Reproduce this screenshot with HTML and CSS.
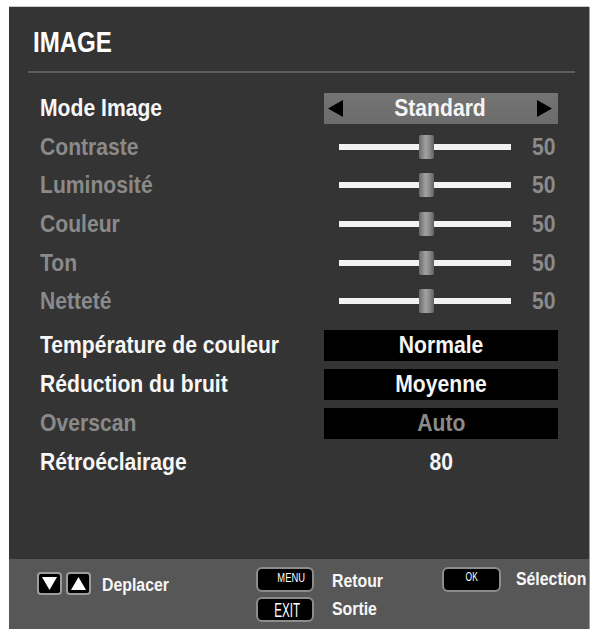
FILE: index.html
```html
<!DOCTYPE html>
<html lang="fr">
<head>
<meta charset="utf-8">
<title>IMAGE</title>
<link rel="stylesheet" href="styles.css">
</head>
<body>
<div class="panel">
  <div class="main">
    <h1 class="title"><span class="cond-l">IMAGE</span></h1>
    <div class="rule"></div>

    <div class="group group-a">
      <div class="row">
        <span class="label on"><span class="cond-l">Mode Image</span></span>
        <div class="ctl select">
          <svg class="tri" width="15" height="17" viewBox="0 0 15 17"><polygon points="15,0 15,17 0,8.5" fill="#000"/></svg>
          <span class="cond-c">Standard</span>
          <svg class="tri" width="15" height="17" viewBox="0 0 15 17"><polygon points="0,0 0,17 15,8.5" fill="#000"/></svg>
        </div>
      </div>
      <div class="row">
        <span class="label off"><span class="cond-l">Contraste</span></span>
        <div class="ctl slider"><div class="track"><div class="thumb"></div></div><span class="val"><span class="cond-l">50</span></span></div>
      </div>
      <div class="row">
        <span class="label off"><span class="cond-l">Luminosité</span></span>
        <div class="ctl slider"><div class="track"><div class="thumb"></div></div><span class="val"><span class="cond-l">50</span></span></div>
      </div>
      <div class="row">
        <span class="label off"><span class="cond-l">Couleur</span></span>
        <div class="ctl slider"><div class="track"><div class="thumb"></div></div><span class="val"><span class="cond-l">50</span></span></div>
      </div>
      <div class="row">
        <span class="label off"><span class="cond-l">Ton</span></span>
        <div class="ctl slider"><div class="track"><div class="thumb"></div></div><span class="val"><span class="cond-l">50</span></span></div>
      </div>
      <div class="row">
        <span class="label off"><span class="cond-l">Netteté</span></span>
        <div class="ctl slider"><div class="track"><div class="thumb"></div></div><span class="val"><span class="cond-l">50</span></span></div>
      </div>
    </div>

    <div class="group group-b">
      <div class="row row-b">
        <span class="label on"><span class="cond-l">Température de couleur</span></span>
        <div class="ctl box"><span class="cond-c">Normale</span></div>
      </div>
      <div class="row row-b">
        <span class="label on"><span class="cond-l">Réduction du bruit</span></span>
        <div class="ctl box"><span class="cond-c">Moyenne</span></div>
      </div>
      <div class="row row-b">
        <span class="label off"><span class="cond-l">Overscan</span></span>
        <div class="ctl box dim"><span class="cond-c">Auto</span></div>
      </div>
      <div class="row row-b">
        <span class="label on"><span class="cond-l">Rétroéclairage</span></span>
        <div class="ctl plain"><span class="cond-c">80</span></div>
      </div>
    </div>
  </div>

  <div class="foot">
    <div class="fgroup fg-move">
      <span class="key">
        <svg width="21" height="19" viewBox="0 0 21 19"><polygon points="3,3 18,3 10.5,16" fill="#fff"/></svg>
      </span>
      <span class="key">
        <svg width="21" height="19" viewBox="0 0 21 19"><polygon points="10.5,3 18,16 3,16" fill="#fff"/></svg>
      </span>
      <span class="ftext move-text"><span class="cond-l">Deplacer</span></span>
    </div>
    <div class="fgroup fg-nav">
      <span class="btn"><span class="btn-menu">MENU</span></span>
      <span class="ftext nav-top"><span class="cond-l">Retour</span></span>
      <span class="btn"><span class="btn-exit">EXIT</span></span>
      <span class="ftext"><span class="cond-l">Sortie</span></span>
    </div>
    <div class="fgroup fg-ok">
      <span class="btn btn-okbox"><span class="btn-ok">OK</span></span>
      <span class="ftext ok-text"><span class="cond-l">Sélection</span></span>
    </div>
  </div>
</div>
</body>
</html>
```

FILE: styles.css
```css
html, body {
  margin: 0;
  padding: 0;
  background: #ffffff;
}

body {
  font-family: "Liberation Sans", Arial, sans-serif;
  font-weight: bold;
}

.panel {
  margin: 7px 0 0 9px;
  width: 580px;
  height: 622px;
  background: #343434;
  display: flex;
  flex-direction: column;
  box-shadow: 1px 0 0 #9a9a9a, 0 -1px 0 #c8c8c8;
}

.main {
  flex: 1;
  display: flex;
  flex-direction: column;
  padding-top: 21px;
}

.cond-l {
  display: inline-block;
  transform: scaleX(0.88);
  transform-origin: left center;
  white-space: nowrap;
}

.cond-c {
  display: inline-block;
  transform: scaleX(0.88);
  transform-origin: center center;
  white-space: nowrap;
}

.title {
  margin: 0 0 0 24px;
  font-size: 29px;
  line-height: 29px;
  color: #ffffff;
  font-weight: bold;
}

.title .cond-l {
  transform: scaleX(0.83);
}

.rule {
  margin: 14px 14px 0 19px;
  height: 2px;
  background: #5e5e5e;
}

.group-a {
  margin-top: 16px;
}

.group-b {
  margin-top: 5px;
}

.row {
  height: 38.6px;
  display: flex;
  align-items: center;
  padding-left: 31px;
  font-size: 24px;
  line-height: 24px;
}

.row-b {
  height: 39px;
}

.label {
  width: 284px;
  flex: none;
}

.label.on {
  color: #f7f7f7;
}

.label.off {
  color: #8a8a8a;
}

.ctl {
  width: 234px;
  flex: none;
  box-sizing: border-box;
}

.select {
  height: 31px;
  display: flex;
  align-items: center;
  justify-content: space-between;
  padding: 0 6px 0 4px;
  background: linear-gradient(to bottom, #747474, #6c6c6c);
  color: #f5f5f5;
}

.tri {
  display: block;
}

.slider {
  height: 31px;
  display: flex;
  align-items: center;
  padding-left: 15px;
}

.track {
  position: relative;
  width: 172px;
  height: 6px;
  background: #f2f2f2;
  flex: none;
}

.thumb {
  position: absolute;
  left: 80px;
  top: -9px;
  width: 15px;
  height: 24px;
  background: linear-gradient(to right, #6a6a6a, #a2a2a2 45%, #8a8a8a 70%, #606060);
  border-radius: 2px;
}

.val {
  margin-left: 21px;
  color: #8a8a8a;
}

.box {
  height: 31px;
  background: #000000;
  color: #f5f5f5;
  display: flex;
  align-items: center;
  justify-content: center;
}

.box.dim {
  color: #8a8a8a;
}

.plain {
  height: 31px;
  color: #f5f5f5;
  display: flex;
  align-items: center;
  justify-content: center;
}

.foot {
  height: 70px;
  flex: none;
  background: #575757;
  display: flex;
  align-items: flex-start;
  padding: 8px 0 0 28px;
  box-sizing: border-box;
}

.fgroup {
  display: flex;
  flex: none;
}

.fg-move {
  width: 219px;
  align-items: center;
  gap: 4px;
  padding-top: 1px;
}

.key {
  width: 25px;
  height: 23px;
  box-sizing: border-box;
  border: 2px solid #9c9c9c;
  border-radius: 4px;
  background: #000;
  display: flex;
  align-items: center;
  justify-content: center;
}

.key svg {
  display: block;
}

.ftext {
  font-size: 18px;
  line-height: 25px;
  color: #f7f7f7;
  height: 25px;
  display: flex;
  align-items: center;
}

.move-text {
  margin-left: 7px;
  padding-top: 5px;
}

.fg-nav {
  width: 185px;
  display: grid;
  grid-template-columns: 58px auto;
  grid-template-rows: 25px 25px;
  column-gap: 18px;
  row-gap: 5px;
  align-items: center;
}

.nav-top {
  position: relative;
  top: 2px;
}

.fg-ok {
  margin-left: 1px;
}

.btn {
  width: 58px;
  height: 25px;
  box-sizing: border-box;
  border: 2px solid #8c8c8c;
  border-radius: 6px;
  background: #000;
  color: #fff;
  font-weight: normal;
  display: flex;
  align-items: center;
  justify-content: center;
  overflow: hidden;
}

.btn-menu {
  display: inline-block;
  font-size: 13px;
  line-height: 13px;
  transform: scaleX(0.72);
  margin-left: 12px;
  margin-top: -4px;
}

.btn-exit {
  display: inline-block;
  font-size: 20px;
  line-height: 20px;
  transform: scaleX(0.58);
  margin-left: 4px;
}

.btn-okbox {
  width: 59px;
}

.btn-ok {
  display: inline-block;
  font-size: 12px;
  line-height: 12px;
  transform: scaleX(0.7);
  margin-top: -6px;
}

.ok-text {
  margin-left: 15px;
}
```
